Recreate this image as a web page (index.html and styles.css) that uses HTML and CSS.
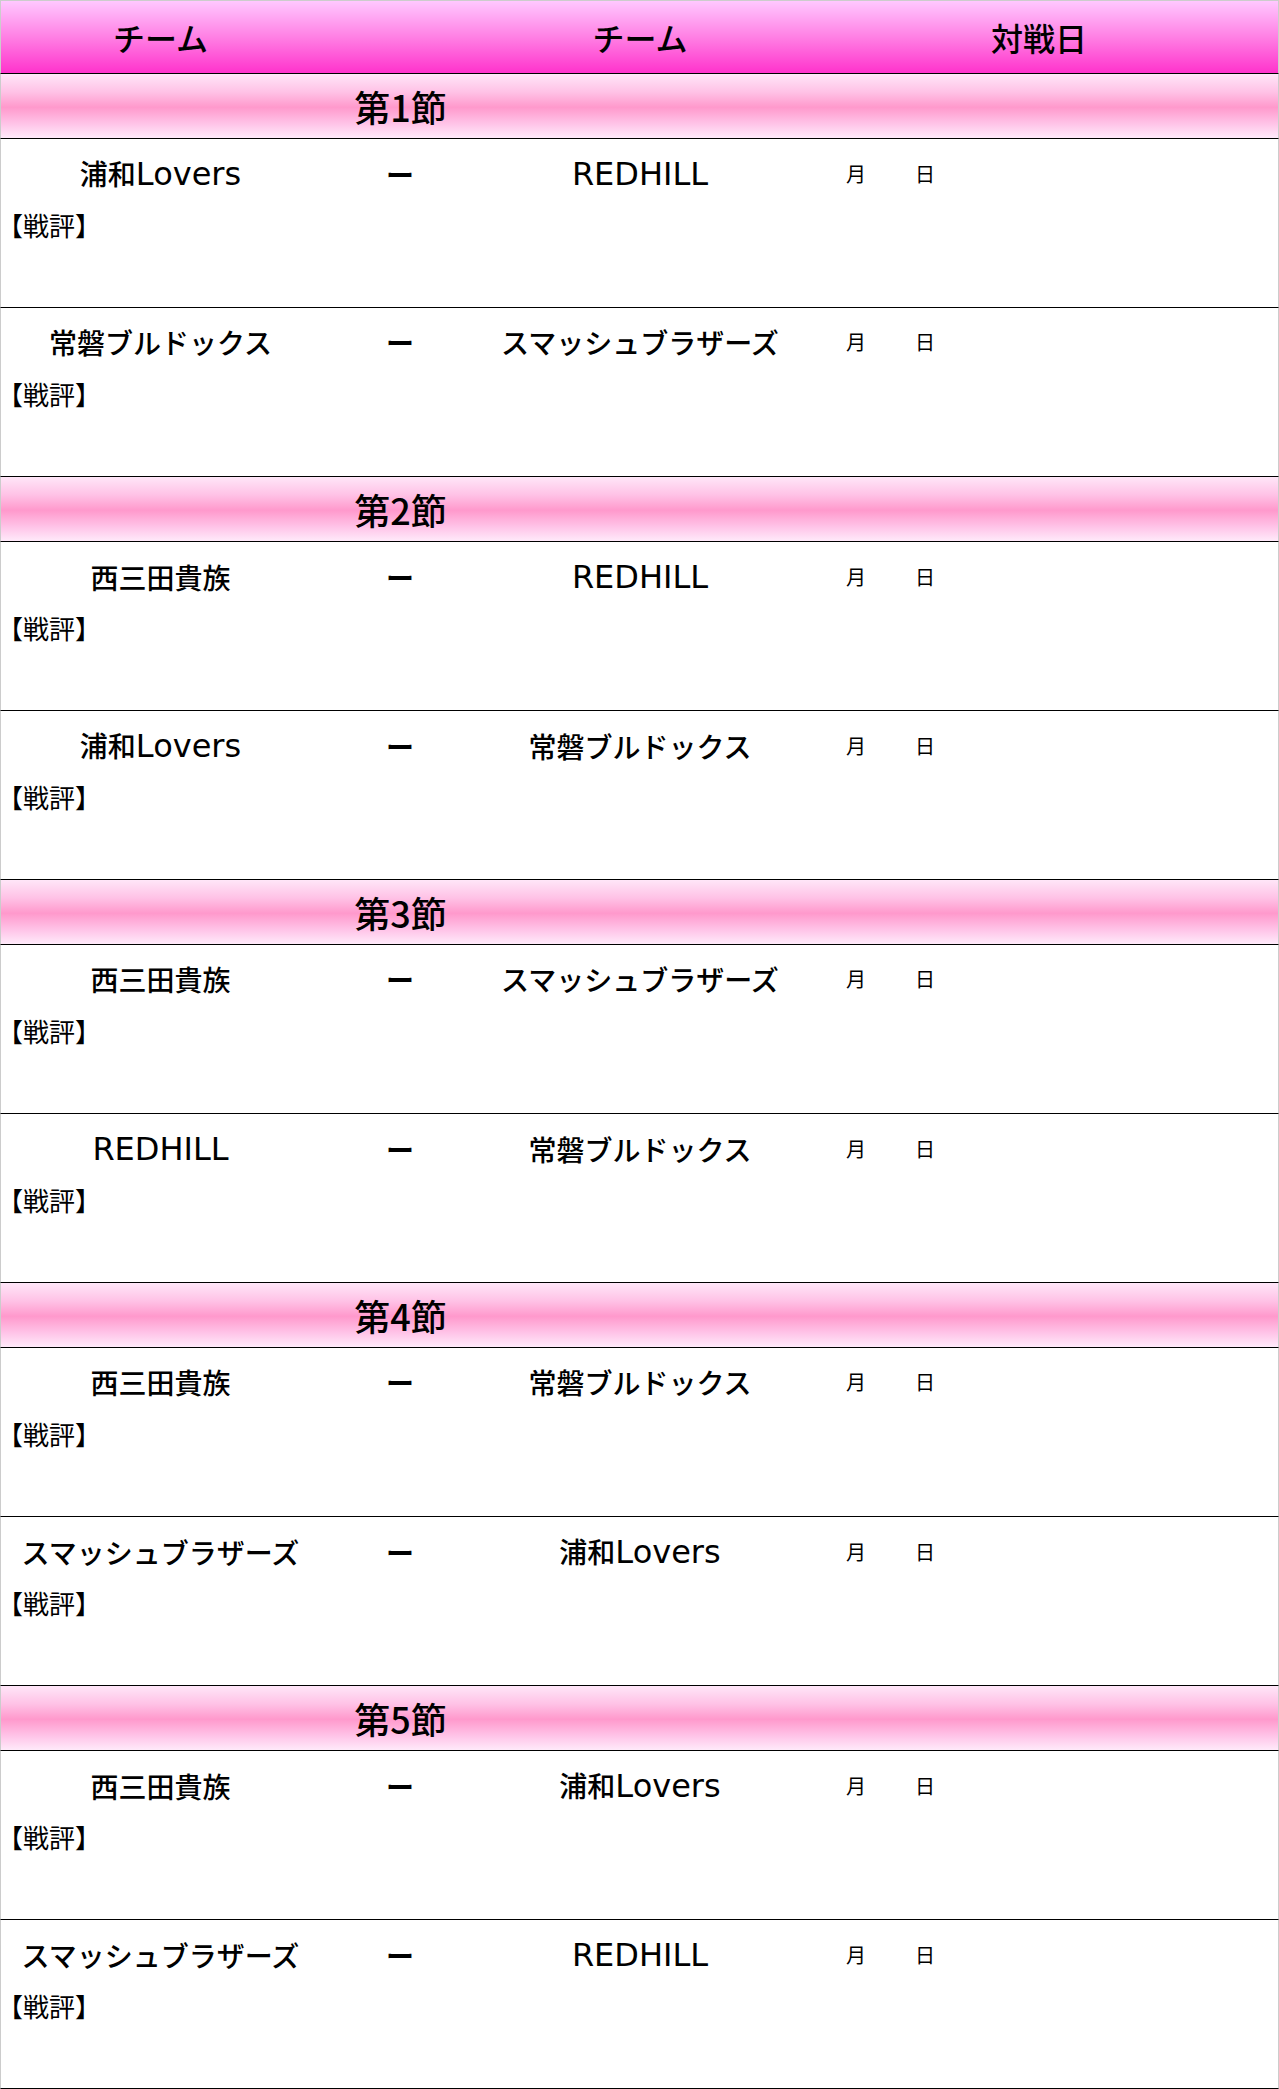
FILE: index.html
```html
<!DOCTYPE html>
<html lang="ja">
<head>
<meta charset="utf-8">
<title>対戦表</title>
<link rel="stylesheet" href="styles.css">
</head>
<body>
<div class="schedule">
  <div class="row head">
    <div class="cell">チーム</div>
    <div class="cell"></div>
    <div class="cell">チーム</div>
    <div class="cell">対戦日</div>
  </div>

  <div class="row band"><div class="round">第1節</div></div>
  <div class="row match">
    <div class="line">
      <div class="team">浦和<span class="en">Lovers</span></div>
      <div class="vs">ー</div>
      <div class="team"><span class="en">REDHILL</span></div>
      <div class="date"><span class="m">月</span><span>日</span></div>
    </div>
    <div class="review">【戦評】</div>
  </div>
  <div class="row match">
    <div class="line">
      <div class="team">常磐ブルドックス</div>
      <div class="vs">ー</div>
      <div class="team">スマッシュブラザーズ</div>
      <div class="date"><span class="m">月</span><span>日</span></div>
    </div>
    <div class="review">【戦評】</div>
  </div>

  <div class="row band"><div class="round">第2節</div></div>
  <div class="row match">
    <div class="line">
      <div class="team">西三田貴族</div>
      <div class="vs">ー</div>
      <div class="team"><span class="en">REDHILL</span></div>
      <div class="date"><span class="m">月</span><span>日</span></div>
    </div>
    <div class="review">【戦評】</div>
  </div>
  <div class="row match">
    <div class="line">
      <div class="team">浦和<span class="en">Lovers</span></div>
      <div class="vs">ー</div>
      <div class="team">常磐ブルドックス</div>
      <div class="date"><span class="m">月</span><span>日</span></div>
    </div>
    <div class="review">【戦評】</div>
  </div>

  <div class="row band"><div class="round">第3節</div></div>
  <div class="row match">
    <div class="line">
      <div class="team">西三田貴族</div>
      <div class="vs">ー</div>
      <div class="team">スマッシュブラザーズ</div>
      <div class="date"><span class="m">月</span><span>日</span></div>
    </div>
    <div class="review">【戦評】</div>
  </div>
  <div class="row match">
    <div class="line">
      <div class="team"><span class="en">REDHILL</span></div>
      <div class="vs">ー</div>
      <div class="team">常磐ブルドックス</div>
      <div class="date"><span class="m">月</span><span>日</span></div>
    </div>
    <div class="review">【戦評】</div>
  </div>

  <div class="row band"><div class="round">第4節</div></div>
  <div class="row match">
    <div class="line">
      <div class="team">西三田貴族</div>
      <div class="vs">ー</div>
      <div class="team">常磐ブルドックス</div>
      <div class="date"><span class="m">月</span><span>日</span></div>
    </div>
    <div class="review">【戦評】</div>
  </div>
  <div class="row match">
    <div class="line">
      <div class="team">スマッシュブラザーズ</div>
      <div class="vs">ー</div>
      <div class="team">浦和<span class="en">Lovers</span></div>
      <div class="date"><span class="m">月</span><span>日</span></div>
    </div>
    <div class="review">【戦評】</div>
  </div>

  <div class="row band"><div class="round">第5節</div></div>
  <div class="row match">
    <div class="line">
      <div class="team">西三田貴族</div>
      <div class="vs">ー</div>
      <div class="team">浦和<span class="en">Lovers</span></div>
      <div class="date"><span class="m">月</span><span>日</span></div>
    </div>
    <div class="review">【戦評】</div>
  </div>
  <div class="row match">
    <div class="line">
      <div class="team">スマッシュブラザーズ</div>
      <div class="vs">ー</div>
      <div class="team"><span class="en">REDHILL</span></div>
      <div class="date"><span class="m">月</span><span>日</span></div>
    </div>
    <div class="review">【戦評】</div>
  </div>
</div>
</body>
</html>
```

FILE: styles.css
```css
html, body {
  margin: 0;
  padding: 0;
  background: #ffffff;
}

body {
  font-family: "Noto Sans CJK JP", "Noto Sans", sans-serif;
  color: #000000;
}

.schedule {
  border-top: 1px solid #cccccc;
}

.row {
  border-left: 1px solid #cccccc;
  border-right: 1px solid #cccccc;
  border-bottom: 1px solid #000000;
}

.head,
.line,
.band {
  display: grid;
  grid-template-columns: 319px 160px 320px 1fr;
}

.head {
  height: 72px;
  background: linear-gradient(#ffc8ff 0%, #ff80e4 50%, #ff33cc 100%);
  font-size: 32px;
  font-weight: 500;
  line-height: 72px;
}

.head .cell {
  text-align: center;
}

.band {
  height: 64px;
  background: linear-gradient(#ffe6f8 0%, #ffc2e6 28%, #ff99cc 52%, #ffc4e8 78%, #ffeafa 100%);
}

.round {
  grid-column: 1 / 4;
  text-align: center;
  font-size: 36px;
  font-weight: 500;
  line-height: 64px;
}

.match {
  height: 154px;
  padding-top: 14px;
}

.line {
  height: 40px;
  align-items: center;
}

.team {
  text-align: center;
  font-size: 28px;
  font-weight: 500;
  line-height: 40px;
  white-space: nowrap;
}

.en {
  font-family: "DejaVu Sans", sans-serif;
  font-size: 32px;
  font-weight: normal;
}

.vs {
  text-align: center;
  font-size: 28px;
  font-weight: bold;
  line-height: 40px;
}

.date {
  display: flex;
  padding-left: 46px;
  font-size: 20px;
  line-height: 40px;
}

.date .m {
  margin-right: 49px;
}

.review {
  margin-top: 15px;
  margin-left: -4px;
  font-size: 26px;
  line-height: 34px;
}
```
